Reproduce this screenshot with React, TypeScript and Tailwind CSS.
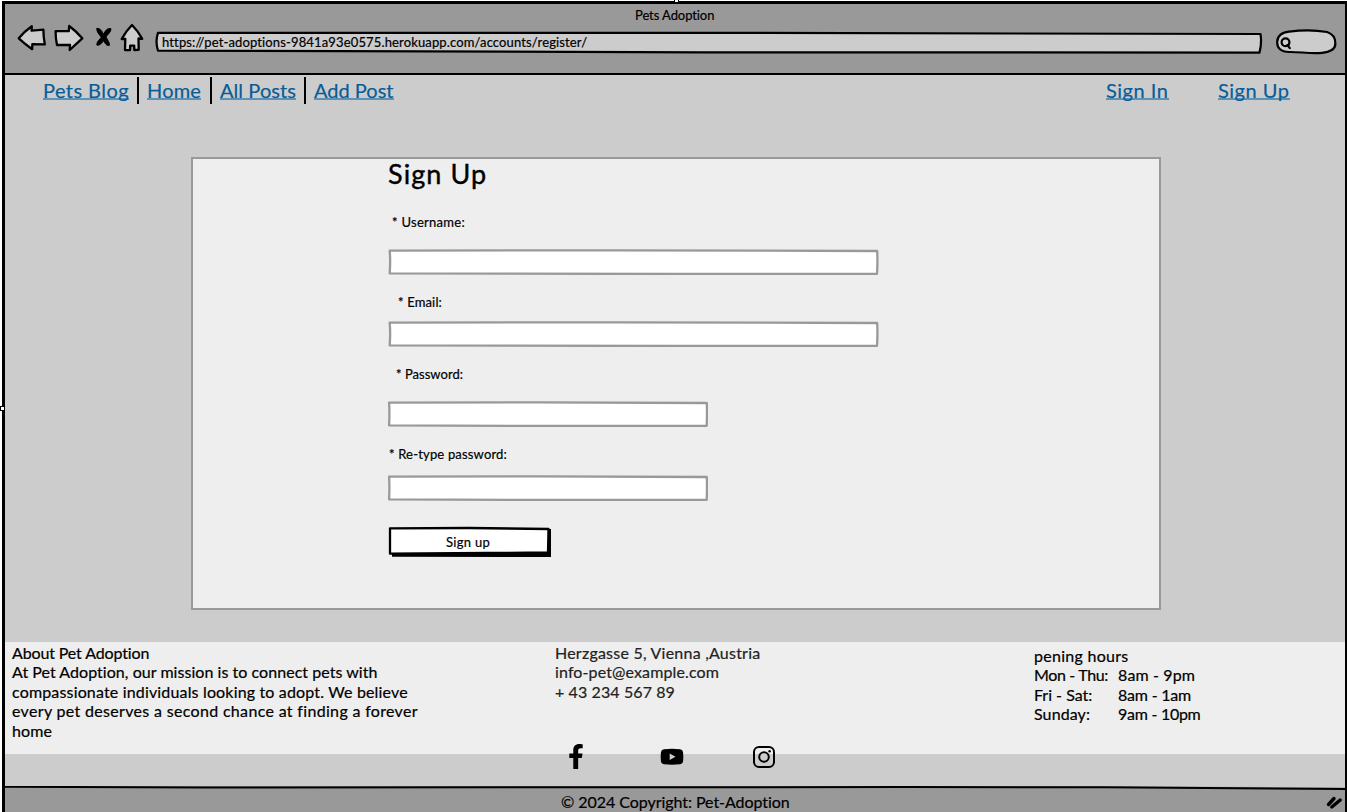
import type { ReactNode } from "react";
import { FaFacebookF } from "react-icons/fa";

function NavIcons() {
  return (
    <svg
      className="h-[34px] w-[130px] shrink-0"
      viewBox="16 21 130 34"
      fill="#cccccc"
      stroke="#000"
      strokeWidth="2.3"
      strokeLinejoin="round"
      strokeLinecap="round"
    >
      <path d="M18.7 38.3 Q25 31 31.8 26.3 L31.6 30.7 L43.4 29.7 Q43.4 37 44.8 44.4 L32.3 44.2 L32.2 49.2 Q25 44 18.7 38.3 Z" />
      <path d="M55.6 31.2 L68.8 31.1 L69.2 26 Q76 31 82.3 38.3 Q75 45 69.7 50 L70 45 L57 45 Q55.5 38 55.6 31.2 Z" />
      <path d="M132 25 Q138 31 142.2 38.8 L138.5 38.5 L138.7 49.8 L134.3 50 L134.2 45.6 L130.2 45.6 L130 50.2 L125 50 L125.3 38.8 L121.7 39 Q126 31 132 25 Z" />
      <path
        d="M97 28.5 C100 27.5 102.5 32 103.6 34.5 C105 31 107.5 27.5 111 28.8 C111.2 32 107.5 34.5 106 37 C107.5 40 110 43 109.4 45.3 C106.5 46.5 104.8 42.5 103.5 40.7 C102 43 99.5 46 96.8 45 C96.6 41.5 100 39.5 101.2 37.3 C99.5 34.5 96 31.5 97 28.5 Z"
        fill="#000"
        strokeWidth="1"
      />
    </svg>
  );
}

function AddressBar() {
  return (
    <div className="relative mt-[10px] ml-[9px] h-[23px] w-[1108px] shrink-0">
      <svg className="absolute inset-0 h-full w-full" viewBox="155 31 1108 23" fill="#cccccc" stroke="#000" strokeWidth="2.2" strokeLinejoin="round">
        <path d="M158 32.8 L700 32.8 L1260.5 34 Q1262 43 1259.5 52.6 L700 52.3 L158 50.6 Q155 41.5 158 32.8 Z" />
      </svg>
      <span className="relative block pl-[7px] text-[13px] leading-[23px] tracking-[0.141px]">
        https://pet-adoptions-9841a93e0575.herokuapp.com/accounts/register/
      </span>
    </div>
  );
}

function SearchPill() {
  return (
    <svg className="mt-[7px] ml-[12px] h-[28px] w-[64px] shrink-0" viewBox="1275 28 64 28" fill="#cccccc" stroke="#000" strokeWidth="2.2" strokeLinecap="round">
      <path d="M1289 31.7 C1300 30.3 1315 30 1327 32 C1333 34 1335.3 37 1335.3 43 C1336 50 1330 52 1322 52.8 C1310 53.8 1300 51.8 1289 52 C1281 52 1277 48 1277.2 42 C1277.3 36 1282 32.6 1289 31.7 Z" />
      <circle cx="1285.5" cy="42.3" r="3.9" />
      <path d="M1287.6 45.3 L1289.8 48.2 M1286.8 45.5 L1289 44.6" />
    </svg>
  );
}

function NavLink({ children, className }: { children: ReactNode; className: string }) {
  return (
    <a href="#" className={"mt-[2px] block h-[21px] border-b-2 border-[#5c92b8] text-[20px] leading-[22px] whitespace-nowrap text-[#085c97] [-webkit-text-stroke:0.2px] " + className}>
      {children}
    </a>
  );
}

function Divider() {
  return <span className="h-[27px] w-[2px] bg-black" />;
}

function Field({ label, wide, className, labelClass }: { label: string; wide?: boolean; className: string; labelClass: string }) {
  return (
    <label className={"flex flex-col justify-between " + className}>
      <span className={"text-[13px] leading-[17px] whitespace-nowrap " + labelClass}>{label}</span>
      <span className={"relative block h-[26px] " + (wide ? "w-[491px]" : "w-[320px]")}>
        <svg className="absolute inset-0 h-full w-full" viewBox="0 0 320 26" preserveAspectRatio="none" fill="#fff" stroke="#999" strokeWidth="2.3" strokeLinejoin="round">
          <path vectorEffect="non-scaling-stroke" d="M1.1 1.6 L150 1.3 L318.8 2 Q319.2 12 318.7 24.8 L190 25 L1.1 24.4 Q1.7 12 1.1 1.6 Z" />
        </svg>
        <input className="relative h-full w-full bg-transparent px-2 text-[13px] outline-none" />
      </span>
    </label>
  );
}

export default function App() {
  return (
    <div className="relative h-[812px] w-[1347px] overflow-hidden bg-white pt-px pl-[2px] font-['Lato',sans-serif] text-black [-webkit-text-stroke:0.2px]">
      <div className="flex h-[811px] flex-col border-t-3 border-r-2 border-l-3 border-black bg-[#cccccc]">
        <header className="h-[71px] shrink-0 border-b-2 border-black bg-[#999999]">
          <div className="h-[17px] pt-[3px] pl-[630px] text-[13px] leading-[16px] tracking-[-0.08px]">Pets Adoption</div>
          <div className="flex items-start pl-[11px]">
            <NavIcons />
            <AddressBar />
            <SearchPill />
          </div>
        </header>

        <nav className="flex h-[82px] shrink-0 items-start pt-[2px] pl-[38px]">
          <NavLink className="w-[86px] tracking-[0.438px]">Pets Blog</NavLink>
          <span className="ml-[8px] flex"><Divider /></span>
          <NavLink className="ml-[8px] w-[54px] tracking-[0.173px]">Home</NavLink>
          <span className="ml-[9px] flex"><Divider /></span>
          <NavLink className="ml-[8px] w-[76px] tracking-[0.07px]">All Posts</NavLink>
          <span className="ml-[8px] flex"><Divider /></span>
          <NavLink className="ml-[8px] w-[80px]">Add Post</NavLink>
          <NavLink className="ml-[712px] w-[63px] tracking-[0.521px]">Sign In</NavLink>
          <NavLink className="ml-[49px] w-[72px] tracking-[0.52px]">Sign Up</NavLink>
        </nav>

        <main className="ml-[186px] flex h-[453px] w-[970px] shrink-0 flex-col items-start border-[2.5px] border-[#999999] bg-[#eeeeee] pl-[195px]">
          <h1 className="h-[32px] text-[27px] leading-[30px] tracking-[1.1px] [-webkit-text-stroke:0.4px]">Sign Up</h1>
          <Field wide label="* Username:" className="mt-[23px] h-[61px]" labelClass="pl-[4px] tracking-[0.286px]" />
          <Field wide label="* Email:" className="mt-[19px] h-[53px]" labelClass="pl-[10px] tracking-[0.154px]" />
          <Field label="* Password:" className="mt-[19px] h-[61px]" labelClass="pl-[8px] tracking-[0.03px]" />
          <Field label="* Re-type password:" className="mt-[19px] h-[55px]" labelClass="pl-[1px] tracking-[0.178px]" />
          <button className="relative mt-[25px] h-[32px] w-[164px]">
            <svg className="absolute inset-0 h-full w-full" viewBox="0 0 164 32">
              <path d="M4 4 L163 3 L163 31 L4 30.7 Z" />
              <path d="M2 2.3 L80 2 L160.5 3 L160 26.5 L100 27 L2 27.7 Z" fill="#fff" stroke="#000" strokeWidth="2.3" strokeLinejoin="round" />
            </svg>
            <span className="relative block h-full pr-[4px] text-[13px] leading-[32px] tracking-[0.287px]">Sign up</span>
          </button>
        </main>

        <footer className="mt-[32px] flex grow flex-col">
          <div className="flex h-[112px] shrink-0 bg-[#eeeeee] text-[16px] leading-[19.4px] whitespace-nowrap">
            <section className="w-[543px] pt-px pl-[7px]">
              <h2 className="tracking-[-0.133px]">About Pet Adoption</h2>
              <p className="tracking-[0.044px]">At Pet Adoption, our mission is to connect pets with</p>
              <p className="tracking-[0.162px]">compassionate individuals looking to adopt. We believe</p>
              <p className="tracking-[0.325px]">every pet deserves a second chance at finding a forever</p>
              <p className="tracking-[0.098px]">home</p>
            </section>
            <section className="w-[484px] pt-px pl-[7px] text-[#222]">
              <p className="tracking-[0.227px]">Herzgasse 5, Vienna ,Austria</p>
              <p className="tracking-[0.12px]">info-pet@example.com</p>
              <p className="tracking-[0.103px]">+ 43 234 567 89</p>
            </section>
            <section className="pt-[4px] pl-[2px]">
              <h2 className="tracking-[0.279px]">pening hours</h2>
              <div className="grid grid-cols-[84px_100px]">
                <span className="tracking-[-0.34px]">Mon - Thu:</span>
                <span className="tracking-[0.118px]">8am - 9pm</span>
                <span>Fri - Sat:</span>
                <span className="tracking-[-0.213px]">8am - 1am</span>
                <span className="tracking-[0.095px]">Sunday:</span>
                <span className="tracking-[-0.271px]">9am - 10pm</span>
              </div>
            </section>
          </div>
          <div className="relative -mt-[10px] flex h-[42px] shrink-0 items-start pl-[563px]">
            <FaFacebookF className="h-[25px] w-[16px]" />
            <svg className="mt-[4px] ml-[76px] h-[18px] w-[24px]" viewBox="0 0 24 18">
              <path d="M4 1.3 Q12 .4 20 1.3 Q22.6 1.6 23 4 Q23.6 9 23 13.5 Q22.6 16 20 16.3 Q12 17.2 4 16.3 Q1.4 16 1 13.5 Q.4 9 1 4 Q1.4 1.6 4 1.3 Z" />
              <path d="M9.7 5.6 L15.5 8.8 L9.7 12 Z" fill="#ccc" />
            </svg>
            <svg className="mt-px ml-[68px] h-[24px] w-[24px]" viewBox="0 0 24 24" fill="none" stroke="#000" strokeWidth="2">
              <rect x="2" y="2" width="20" height="20" rx="5" />
              <circle cx="12" cy="12" r="4.8" />
              <circle cx="17.6" cy="6.3" r="1.2" fill="#000" stroke="none" />
            </svg>
          </div>
          <div className="relative grow bg-[#999999]">
            <svg className="absolute inset-x-0 top-0 h-[4px] w-full" viewBox="0 0 1340 4" preserveAspectRatio="none">
              <path d="M0 0 L800 0 L1340 0 L1340 1.4 L1040 0 Z" fill="#ccc" />
              <path d="M0 .8 L200 1.4 L900 1.1 L1100 1.3 L1340 3" fill="none" stroke="#000" strokeWidth="2" />
            </svg>
            <p className="pt-[6px] pl-[556px] text-[16px] leading-[20px] tracking-[-0.051px]">© 2024 Copyright: Pet-Adoption</p>
            <svg className="absolute right-[2px] bottom-[2px] h-[14px] w-[17px]" viewBox="0 0 17 14" stroke="#000" strokeWidth="3.4" strokeLinecap="round">
              <path d="M2.5 8.5 L8 2.5 M5.8 11 L14.2 4" />
            </svg>
          </div>
        </footer>
      </div>
      <span className="absolute top-[-2px] left-[674px] h-[5px] w-[5px] border border-black bg-white" />
      <span className="absolute top-[406px] left-0 h-[5px] w-[5px] border border-black bg-white" />
    </div>
  );
}
